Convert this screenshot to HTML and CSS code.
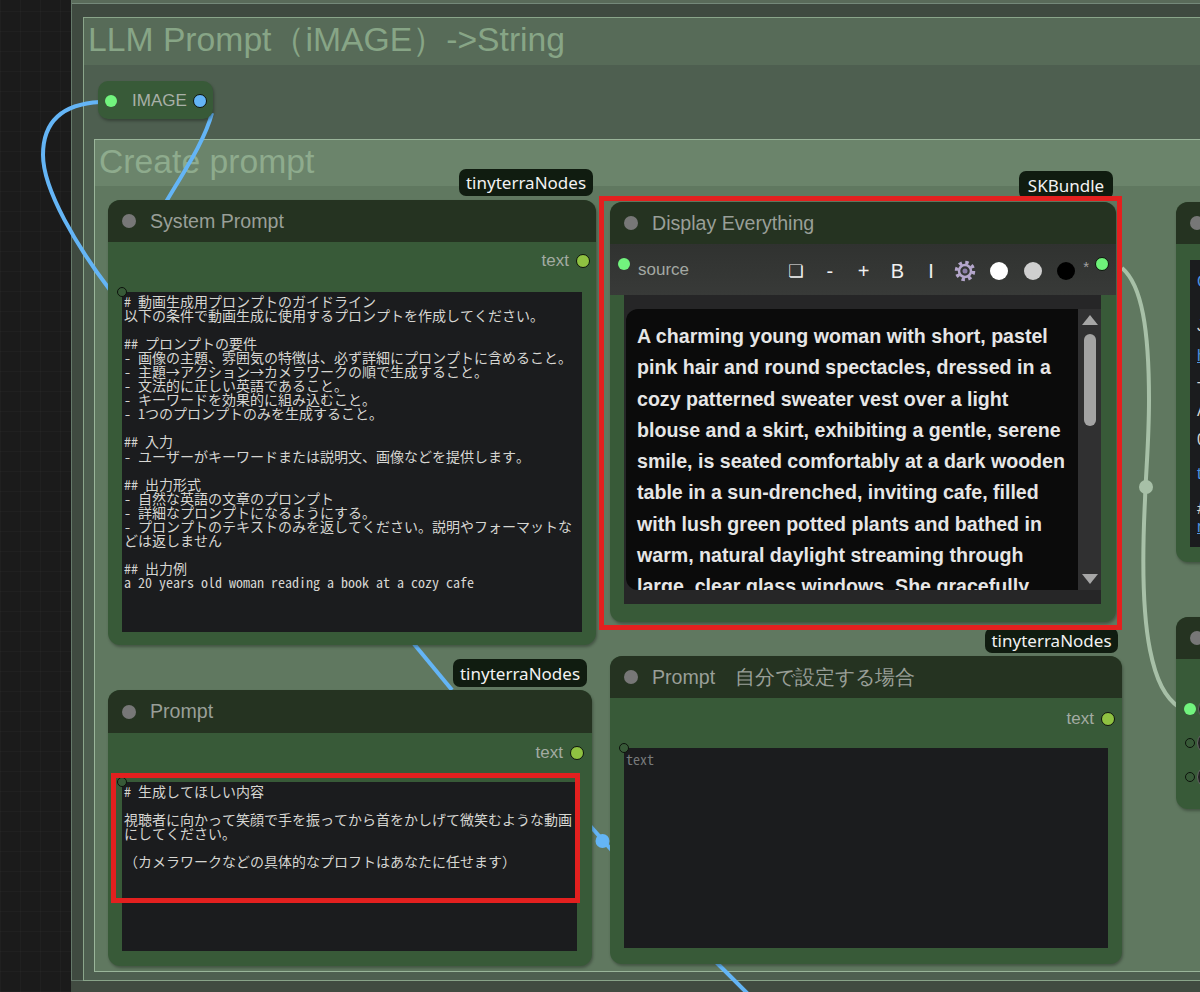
FILE: index.html
```html
<!DOCTYPE html>
<html lang="ja">
<head>
<meta charset="utf-8">
<title>LLM Prompt</title>
<link rel="stylesheet" href="styles.css">
</head>
<body>
<main class="canvas">
  <div class="group outer"></div>
  <section class="group llm"><h2 class="group-title llm-title">LLM Prompt（iMAGE）-&gt;String</h2></section>
  <section class="group create"><h2 class="group-title create-title">Create prompt</h2></section>

  <svg class="links" width="1200" height="992" viewBox="0 0 1200 992" aria-hidden="true">
    <g class="link-blue">
      <path d="M100 102 C62 104 43 122 43 155 C43 190 78 248 110 290"/>
      <path d="M212 113 C205 140 185 170 166 202"/>
      <path d="M414 644 L452 690"/>
      <path d="M585 820 L622 862"/>
      <path d="M716 962 L748 994"/>
    </g>
    <circle class="link-dot-blue" cx="602.500" cy="841" r="7"/>
    <path class="link-pale" d="M1122 268 C1142 285 1149 330 1149 400 C1149 440 1146 470 1145 500 C1142 560 1142 610 1150 650 C1156 680 1165 698 1180 708"/>
    <circle class="link-dot-pale" cx="1146" cy="487" r="7"/>
  </svg>

  <article class="node reroute">
    <span class="dot dot-green-plain"></span>
    <span class="reroute-label">IMAGE</span>
    <span class="dot dot-blue"></span>
  </article>

  <article class="node sys">
    <header class="node-head"><span class="head-dot"></span><span class="node-title">System Prompt</span></header>
    <div class="slot-row slot-sys"><span class="slot-label">text</span><span class="dot dot-lime"></span></div>
    <div class="textarea"><span class="ring"></span><pre class="ta-text"># 動画生成用プロンプトのガイドライン
以下の条件で動画生成に使用するプロンプトを作成してください。

## プロンプトの要件
- 画像の主題、雰囲気の特徴は、必ず詳細にプロンプトに含めること。
- 主題→アクション→カメラワークの順で生成すること。
- 文法的に正しい英語であること。
- キーワードを効果的に組み込むこと。
- 1つのプロンプトのみを生成すること。

## 入力
- ユーザーがキーワードまたは説明文、画像などを提供します。

## 出力形式
- 自然な英語の文章のプロンプト
- 詳細なプロンプトになるようにする。
- プロンプトのテキストのみを返してください。説明やフォーマットな
どは返しません

## 出力例
a 20 years old woman reading a book at a cozy cafe</pre></div>
  </article>

  <article class="node prompt">
    <header class="node-head"><span class="head-dot"></span><span class="node-title">Prompt</span></header>
    <div class="slot-row slot-prompt"><span class="slot-label">text</span><span class="dot dot-lime"></span></div>
    <div class="textarea"><span class="ring"></span><pre class="ta-text"># 生成してほしい内容

視聴者に向かって笑顔で手を振ってから首をかしげて微笑むような動画
にしてください。

（カメラワークなどの具体的なプロフトはあなたに任せます）</pre></div>
  </article>

  <article class="node self">
    <header class="node-head"><span class="head-dot"></span><span class="node-title">Prompt　自分で設定する場合</span></header>
    <div class="slot-row slot-self"><span class="slot-label">text</span><span class="dot dot-lime"></span></div>
    <div class="textarea"><span class="ring"></span><pre class="ta-text ta-placeholder">text</pre></div>
  </article>

  <article class="node display">
    <header class="node-head"><span class="head-dot"></span><span class="node-title">Display Everything</span></header>
    <div class="toolbar">
      <span class="dot dot-green-plain tool-in"></span>
      <span class="source">source</span>
      <div class="tools">
        <span class="tool tool-copy">❏</span>
        <span class="tool">-</span>
        <span class="tool">+</span>
        <span class="tool tool-b">B</span>
        <span class="tool tool-i">I</span>
        <span class="tool">
          <svg class="gear" width="22" height="22" viewBox="0 0 22 22" aria-hidden="true">
            <circle class="gear-teeth" cx="11" cy="11" r="8.500"/>
            <circle class="gear-body" cx="11" cy="11" r="6"/>
            <circle class="gear-hole" cx="11" cy="11" r="2.500"/>
          </svg>
        </span>
        <span class="tool"><span class="swatch sw-white"></span></span>
        <span class="tool"><span class="swatch sw-grey"></span></span>
        <span class="tool"><span class="swatch sw-black"></span></span>
      </div>
      <span class="star">*</span>
      <span class="dot dot-green tool-out"></span>
    </div>
    <div class="display-panel">
      <div class="display-scroll">
        <div class="display-text">A charming young woman with short, pastel pink hair and round spectacles, dressed in a cozy patterned sweater vest over a light blouse and a skirt, exhibiting a gentle, serene smile, is seated comfortably at a dark wooden table in a sun-drenched, inviting cafe, filled with lush green potted plants and bathed in warm, natural daylight streaming through large, clear glass windows. She gracefully</div>
        <div class="scrollbar">
          <span class="arrow arrow-up"></span>
          <span class="thumb"></span>
          <span class="arrow arrow-down"></span>
        </div>
      </div>
    </div>
  </article>

  <article class="node side-a">
    <header class="node-head"><span class="head-dot"></span></header>
    <div class="side-text">
      <span class="frag frag-blue">C</span>
      <span class="frag">J</span>
      <span class="frag frag-link">h</span>
      <span class="frag">T</span>
      <span class="frag">A</span>
      <span class="frag">0</span>
      <span class="frag frag-blue">t</span>
      <span class="frag">#</span>
      <span class="frag frag-link">n</span>
    </div>
  </article>

  <article class="node side-b">
    <header class="node-head"><span class="head-dot"></span></header>
    <div class="side-row side-first"><span class="dot dot-green-plain"></span><span class="pill"></span></div>
    <div class="side-row"><span class="ring-inline"></span><span class="pill"></span></div>
    <div class="side-row"><span class="ring-inline"></span><span class="pill"></span></div>
  </article>

  <span class="badge badge-sys">tinyterraNodes</span>
  <span class="badge badge-sk">SKBundle</span>
  <span class="badge badge-self">tinyterraNodes</span>
  <span class="badge badge-prompt">tinyterraNodes</span>

  <div class="mark mark-display"></div>
  <div class="mark mark-prompt"></div>
</main>
</body>
</html>
```

FILE: styles.css
```css
* { box-sizing: border-box; }

html, body {
  margin: 0;
  padding: 0;
  background: #1b1b1b;
}

.canvas {
  position: relative;
  width: 1200px;
  height: 992px;
  overflow: hidden;
  font-family: "Liberation Sans", Arial, sans-serif;
  background-color: #1b1b1b;
  background-image:
    repeating-linear-gradient(90deg, rgba(255,255,255,.025) 0 1px, transparent 1px 20px),
    repeating-linear-gradient(0deg, rgba(255,255,255,.025) 0 1px, transparent 1px 20px);
}

/* groups */
.group { position: absolute; }

.outer {
  left: 71px;
  top: -40px;
  width: 1300px;
  height: 1021px;
  background: linear-gradient(#5a6b5a 0 42px, #75897a 42px 43px, #3f4a40 43px);
  border: 1px solid #65796a;
  box-shadow: 0 11px 0 #414b41;
}

.llm {
  left: 83px;
  top: 17px;
  width: 1300px;
  height: 964px;
  background: #4e5f50;
  border: 1px solid #8aa58a;
}

.create {
  left: 94px;
  top: 139px;
  width: 1300px;
  height: 833px;
  background: #607860;
  border: 1px solid #9ab59a;
}

.group-title {
  margin: 0;
  font-weight: 400;
  white-space: nowrap;
}

.llm-title {
  height: 47px;
  padding: 1px 0 0 4px;
  font-size: 33.700px;
  line-height: 40px;
  color: #87a586;
  background: #576b58;
}

.create-title {
  height: 46px;
  padding: 1px 0 0 4px;
  font-size: 33.700px;
  line-height: 40px;
  color: #8eab8d;
  background: #6b846b;
}

/* links */
.links {
  position: absolute;
  left: 0;
  top: 0;
}

.link-blue path {
  fill: none;
  stroke: #64b5f6;
  stroke-width: 4;
}

.link-dot-blue { fill: #64b5f6; }

.link-pale {
  fill: none;
  stroke: #a7c0a7;
  stroke-width: 4;
}

.link-dot-pale { fill: #a7c0a7; }

/* nodes */
.node {
  position: absolute;
  display: flex;
  flex-direction: column;
  background: #385a38;
  border-radius: 12px;
  box-shadow: 1px 2px 3px rgba(0,0,0,.3);
  overflow: hidden;
}

.node-head {
  display: flex;
  flex: none;
  align-items: center;
  gap: 14px;
  height: 42px;
  padding-left: 14px;
  background: #253321;
}

.head-dot {
  flex: none;
  width: 14px;
  height: 14px;
  border-radius: 50%;
  background: #777;
}

.node-title {
  font-size: 19.600px;
  color: #999f98;
  white-space: nowrap;
}

.sys { left: 108px; top: 200px; width: 488px; height: 445px; }
.prompt { left: 108px; top: 690px; width: 484px; height: 276px; }
.self { left: 610px; top: 656px; width: 512px; height: 308px; }
.display { left: 610px; top: 202px; width: 506px; height: 420px; }
.side-a { left: 1176px; top: 202px; width: 60px; height: 360px; }
.side-b { left: 1176px; top: 617px; width: 60px; height: 192px; }
.prompt .node-head { height: 43px; }

.slot-row {
  display: flex;
  align-items: center;
  justify-content: flex-end;
  gap: 7px;
  padding-right: 6px;
}

.slot-sys { height: 38px; margin-bottom: 12px; }
.slot-prompt { height: 39px; margin-bottom: 10px; padding-right: 8px; }
.slot-self { height: 42px; margin-bottom: 8px; padding-right: 7px; }

.slot-label {
  font-size: 17px;
  color: #a3aba2;
}

.dot {
  display: block;
  flex: none;
  border-radius: 50%;
}

.dot-lime {
  width: 14px;
  height: 14px;
  background: #8fc241;
  border: 1.500px solid #0d130c;
}

.dot-green {
  width: 14px;
  height: 14px;
  background: #6ff27a;
  border: 1.500px solid #0d130c;
}

.dot-blue {
  width: 14px;
  height: 14px;
  background: #64b5f6;
  border: 1.500px solid #0d130c;
}

.dot-green-plain {
  width: 12px;
  height: 12px;
  background: #72f47e;
}

.textarea {
  position: relative;
  flex: none;
  margin-left: 14px;
  background: #1b1c1e;
}

.sys .textarea { width: 460px; height: 340px; }
.prompt .textarea { width: 455px; height: 169px; }
.self .textarea { width: 484px; height: 200px; }

.ring {
  position: absolute;
  left: -5px;
  top: -5px;
  width: 10px;
  height: 10px;
  border-radius: 50%;
  background: #385a38;
  border: 1.500px solid #0d130c;
}

.ta-text {
  margin: 0;
  padding: 2px 2px;
  font-family: "Noto Sans Mono CJK JP", "Noto Sans CJK JP", "Liberation Mono", monospace;
  font-size: 14px;
  line-height: 14.050px;
  color: #d6d6d2;
  white-space: pre;
}

.ta-placeholder {
  padding-top: 4px;
  color: #77797a;
}

/* reroute */
.reroute {
  left: 98px;
  top: 81px;
  width: 115px;
  height: 38px;
  flex-direction: row;
  align-items: center;
  padding: 2px 6px 0 7px;
  border-radius: 10px;
  overflow: visible;
}

.reroute-label {
  flex: 1;
  padding-left: 15px;
  font-size: 17px;
  color: #a9b0a8;
}

/* display node */
.toolbar {
  display: flex;
  flex: none;
  align-items: center;
  height: 51px;
  background: linear-gradient(#303230, #383a38);
  position: relative;
}

.tool-in { position: absolute; left: 8px; top: 14px; }

.source {
  margin-left: 28px;
  font-size: 17px;
  color: #a3a8a2;
}

.tools {
  display: flex;
  align-items: center;
  margin-left: 90px;
  height: 100%;
  padding-top: 3px;
}

.tool {
  display: flex;
  align-items: center;
  justify-content: center;
  width: 33.800px;
  font-size: 20px;
  color: #f0f0f0;
}

.tool-copy {
  font-family: "DejaVu Sans", sans-serif;
  font-size: 17px;
}

.tool-b, .tool-i { font-size: 20px; }

.swatch {
  display: block;
  width: 18px;
  height: 18px;
  border-radius: 50%;
}

.sw-white { background: #fff; }
.sw-grey { background: #cfcfcf; }
.sw-black { background: #000; }

.gear-teeth {
  fill: none;
  stroke: #b4a6cb;
  stroke-width: 3.500;
  stroke-dasharray: 3.340 3.340;
}

.gear-body {
  fill: none;
  stroke: #b4a6cb;
  stroke-width: 2.500;
}

.gear-hole { fill: #8b7da6; }

.star {
  margin-left: 0;
  margin-top: -6px;
  font-size: 15px;
  color: #a0a0a0;
}

.tool-out { position: absolute; left: 485px; top: 13px; }

.display-panel {
  flex: none;
  width: 477px;
  height: 309px;
  margin-left: 14px;
  padding: 14px 0 14px 2px;
  background: #262627;
}

.display-scroll {
  display: flex;
  height: 100%;
}

.display-text {
  width: 452px;
  height: 100%;
  padding: 12px 6px 0 11px;
  overflow: hidden;
  font-size: 19.600px;
  font-weight: 700;
  line-height: 31.300px;
  color: #e6e6e6;
  background: #0b0b0b;
  border-top-left-radius: 12px;
  border-bottom-left-radius: 12px;
}

.scrollbar {
  display: flex;
  flex: 1;
  flex-direction: column;
  align-items: center;
  padding: 6px 0 6px;
  background: #303031;
}

.arrow {
  display: block;
  flex: none;
  width: 0;
  height: 0;
  border-left: 8px solid transparent;
  border-right: 8px solid transparent;
}

.arrow-up { border-bottom: 10px solid #a6a6a6; }
.arrow-down { margin-top: auto; border-top: 10px solid #a6a6a6; }

.thumb {
  display: block;
  flex: none;
  width: 12px;
  height: 92px;
  margin-top: 9px;
  border-radius: 6px;
  background: #a3a3a3;
}

/* side nodes */
.side-text {
  display: flex;
  flex: 1;
  flex-direction: column;
  align-items: flex-start;
  margin: 16px 0 15px 14px;
  padding-left: 7px;
  background: #1b1c1e;
  overflow: hidden;
}

.frag {
  display: block;
  height: 16px;
  font-size: 16px;
  line-height: 16px;
  color: #d6d6d2;
}

.frag-blue { color: #4f94e0; }
.frag-link { color: #4f94e0; text-decoration: underline; }

.frag:nth-child(1) { margin-top: 14px; }
.frag:nth-child(2) { margin-top: 28px; }
.frag:nth-child(3) { margin-top: 14px; }
.frag:nth-child(4) { margin-top: 17px; }
.frag:nth-child(5) { margin-top: 6px; }
.frag:nth-child(6) { margin-top: 13px; }
.frag:nth-child(7) { margin-top: 18px; }
.frag:nth-child(8) { margin-top: 19px; }
.frag:nth-child(9) { margin-top: 2px; }

.side-row {
  display: flex;
  align-items: center;
  gap: 2px;
  height: 34px;
  padding-left: 8px;
}

.side-first { margin-top: 33px; }

.ring-inline {
  display: block;
  flex: none;
  width: 10px;
  height: 10px;
  margin-left: 1px;
  border-radius: 50%;
  background: #385a38;
  border: 1.500px solid #0d130c;
}

.pill {
  display: block;
  flex: none;
  width: 40px;
  height: 24px;
  border-radius: 12px;
  background: #222;
  border: 1px solid #666;
}

/* badges */
.badge {
  position: absolute;
  display: flex;
  align-items: center;
  justify-content: center;
  border-radius: 7px;
  background: #101c10;
  color: #f2f2f2;
  font-family: "Noto Sans", sans-serif;
  font-size: 17px;
  white-space: nowrap;
}

.badge-sys { left: 459px; top: 169px; width: 134px; height: 27px; }
.badge-sk { left: 1019px; top: 171px; width: 94px; height: 28px; }
.badge-self { left: 985px; top: 628px; width: 133px; height: 25px; }
.badge-prompt { left: 453px; top: 659px; width: 134px; height: 28px; }

/* red highlight rectangles */
.mark {
  position: absolute;
  border: 5px solid #e3201f;
}

.mark-display { left: 599px; top: 196px; width: 523px; height: 434px; }
.mark-prompt { left: 111px; top: 773px; width: 469px; height: 130px; }
```
